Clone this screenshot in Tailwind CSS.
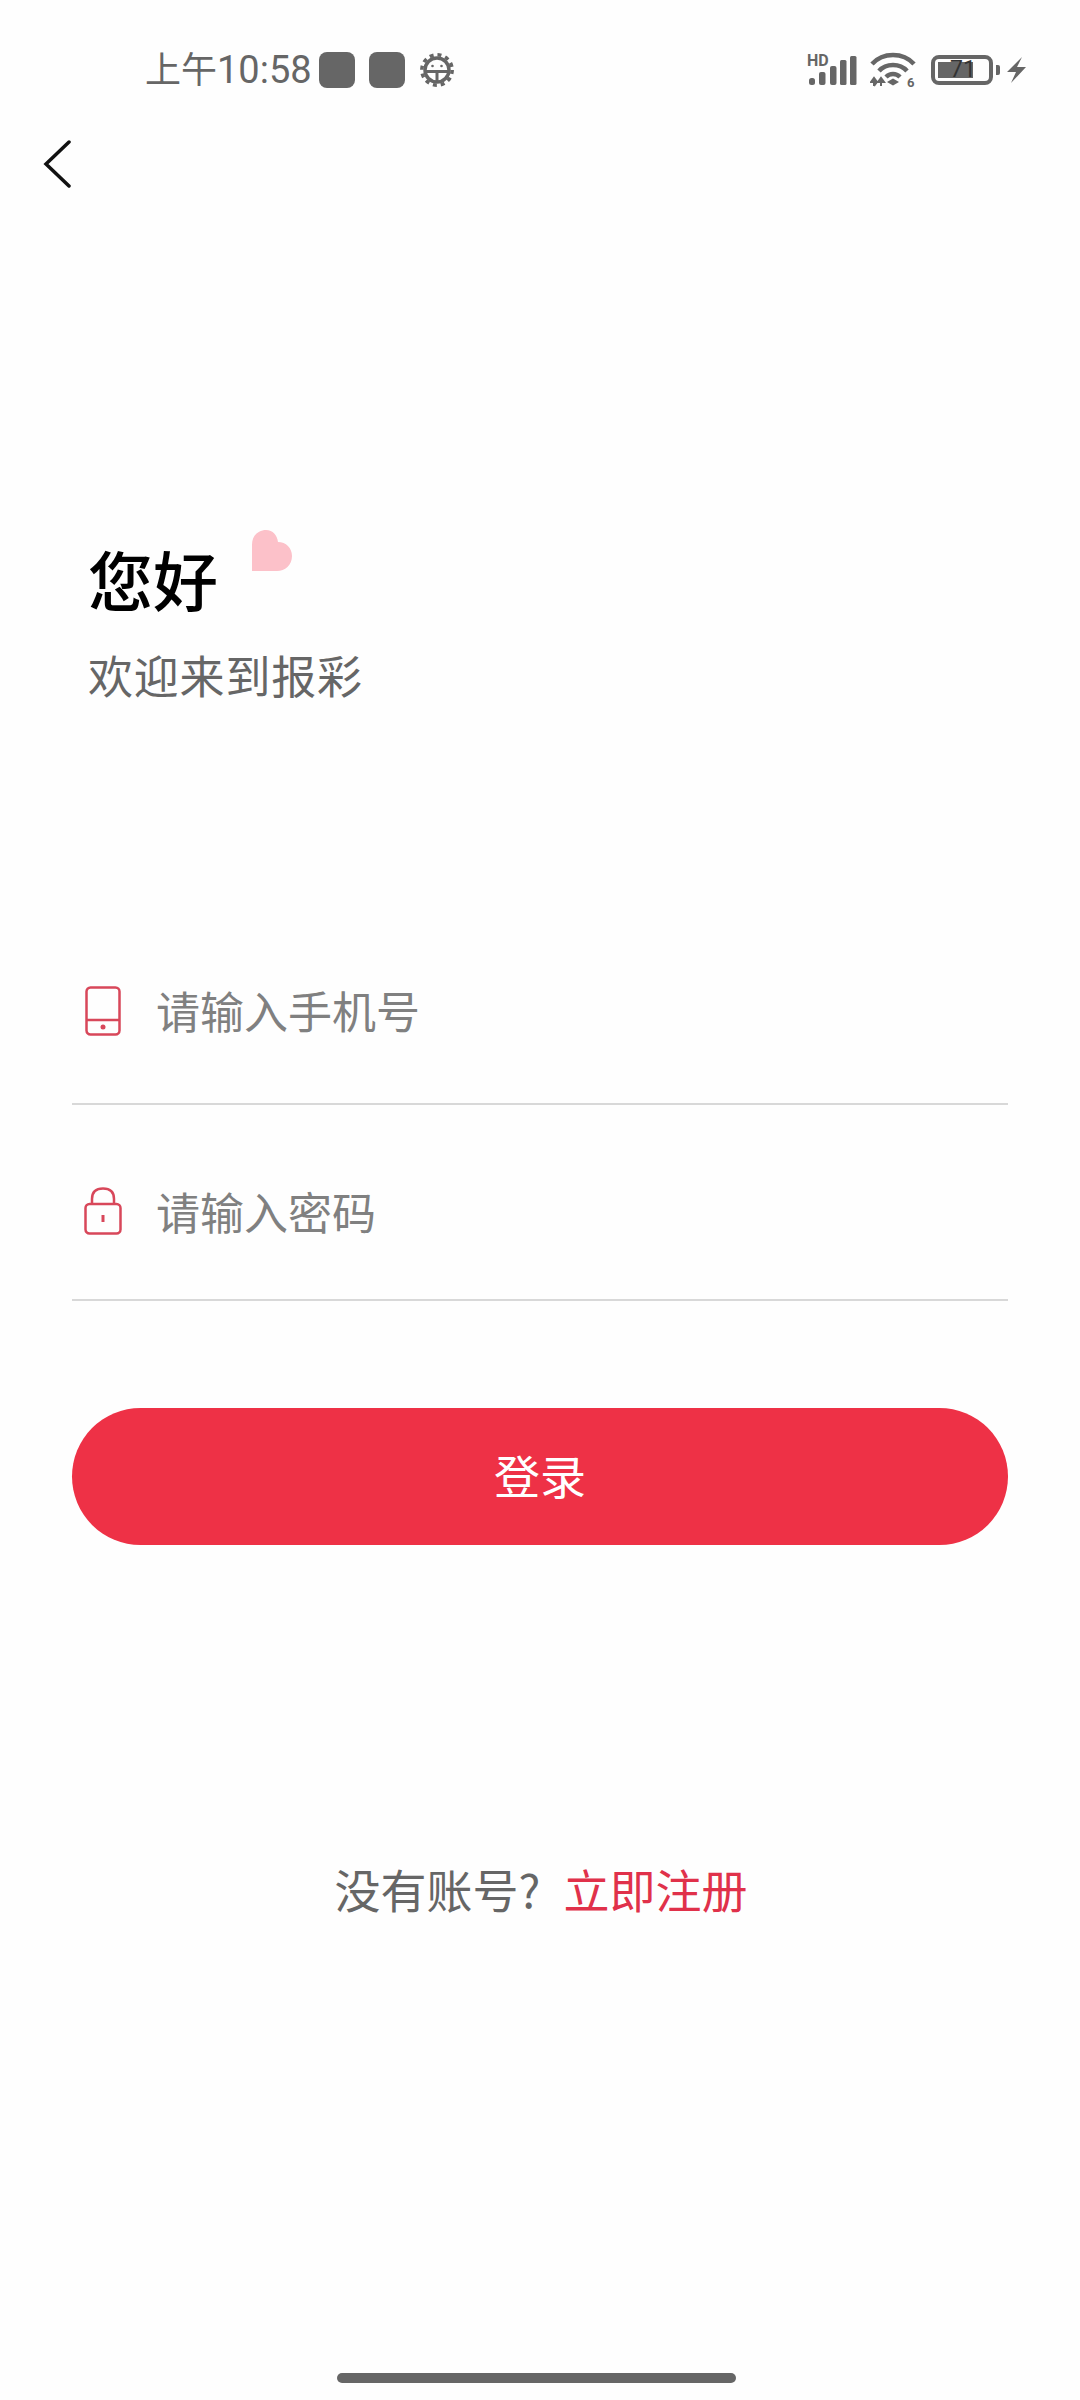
<!DOCTYPE html>
<html lang="zh">
<head>
    <meta charset="UTF-8">
    <meta name="viewport" content="width=device-width, initial-scale=1.0">
    <title>登录</title>
    <script src="https://cdn.jsdelivr.net/npm/@tailwindcss/browser@4"></script>
</head>
<body class="bg-white font-['Noto_Sans_CJK_SC','Noto_Sans',sans-serif]">
    <div class="relative w-[1080px] h-[2400px] overflow-hidden bg-[#fefefe]">
        <!-- Status bar -->
        <div class="flex items-center justify-between h-[70px] pt-[35px] pl-[145px] pr-[53px] box-content">
            <div class="flex items-center text-[#666666]">
                <span class="w-[174px] text-[36px] leading-[40px] whitespace-nowrap font-['Roboto','Noto_Sans_CJK_SC',sans-serif]">上午<span class="text-[38px]">10:58</span></span>
                <span class="w-[36px] h-[36px] rounded-[8px] bg-[#666666]"></span>
                <span class="w-[36px] h-[36px] rounded-[8px] bg-[#666666] ml-[14px]"></span>
                <svg class="ml-[14px]" width="36" height="36" viewBox="0 0 36 36" fill="none" stroke="#666666">
                    <circle cx="18" cy="18" r="12" stroke-width="3.5"/>
                    <circle cx="18" cy="18" r="15.2" stroke-width="3.5" stroke-dasharray="4 3.96"/>
                    <path d="M6 19.5H30M18 19.5V30" stroke-width="3"/>
                    <circle cx="13.5" cy="14" r="1.3" fill="#666666" stroke="none"/>
                    <circle cx="22.5" cy="14" r="1.3" fill="#666666" stroke="none"/>
                </svg>
            </div>
            <div class="flex items-center">
                <svg width="50" height="44" viewBox="0 -6 50 44" fill="#666666">
                    <text x="0" y="12" font-size="16" font-weight="700" font-family="Roboto">HD</text>
                    <rect x="2" y="24" width="6" height="7" rx="2.5"/>
                    <rect x="12" y="18" width="6.5" height="13" rx="2"/>
                    <rect x="23" y="12" width="6.5" height="19" rx="2"/>
                    <rect x="33" y="6" width="6.5" height="25" rx="1.5"/>
                    <rect x="43" y="2" width="6.5" height="29" rx="1.5"/>
                </svg>
                <svg class="ml-[13px]" width="46" height="46" viewBox="0 -6 46 46" fill="none" stroke="#666666" stroke-width="4.5">
                    <path d="M2 11C13 -1 33 -1 44 11"/>
                    <path d="M9 18C16 10 30 10 37 18"/>
                    <path d="M16 24C20 20 26 20 30 24"/>
                    <path d="M17 29L23 25.5L29 29L23 32.5Z" fill="#666666" stroke="none"/>
                    <path d="M1 29H7L4 25ZM4 33L7 29M8 29L11 25L14 29H8ZM11 33V29M4 33V29" stroke-width="2" fill="#666666"/>
                    <text x="37" y="33.5" font-size="13" font-weight="700" font-family="Roboto" fill="#666666" stroke="none">6</text>
                </svg>
                <div class="relative ml-[15px] w-[62px] h-[30px] rounded-[8px] border-[4px] border-[#666666] p-[3px]">
                    <div class="w-[35px] h-full bg-[#666666]"></div>
                    <span class="absolute left-[15px] top-[-2px] text-[23px] leading-[26px] text-[#333333] font-['Roboto',sans-serif]">71</span>
                </div>
                <span class="ml-[3px] w-[4px] h-[10px] bg-[#666666] rounded-r-[2px]"></span>
                <svg class="ml-[7px]" width="20" height="28" viewBox="0 0 20 28" fill="#666666">
                    <path d="M15 1L0 16H9L4 27L19 11H10Z"/>
                </svg>
            </div>
        </div>

        <!-- Back -->
        <div class="pl-[41px] mt-[34px]">
            <svg width="30" height="50" viewBox="0 0 30 50" fill="none" stroke="#111111" stroke-width="3.5" stroke-linecap="round">
                <path d="M28 3L5 25L28 47"/>
            </svg>
        </div>

        <!-- Greeting -->
        <div class="pl-[88px] mt-[351px] relative">
            <svg class="absolute left-[251px] top-[-11px]" width="42" height="43" viewBox="0 0 42 43" fill="#fcc1c9">
                <path d="M1 42V16C1 6 8 1 15 1C22 1 26 6 27 13C35 13 41 19 41 27C41 36 34 42 26 42Z"/>
            </svg>
            <h1 class="text-[65px] leading-[76px] font-medium text-black">您好</h1>
            <p class="text-[45px] leading-[60px] mt-[29px] text-[#666666] tracking-[0.8px]">欢迎来到报彩</p>
        </div>

        <!-- Form -->
        <div class="mx-[72px] mt-[240px]">
            <div class="flex items-center h-[132px] border-b-2 border-[#d8d8d8] pb-[26px] pl-[13px] box-content">
                <svg width="36" height="50" viewBox="0 0 36 50" fill="none" stroke="#d8475a" stroke-width="2.5">
                    <rect x="1.5" y="1.5" width="33" height="47" rx="4"/>
                    <path d="M1.5 34H34.5"/>
                    <circle cx="18" cy="41" r="2.5" fill="#d8475a" stroke="none"/>
                </svg>
                <span class="ml-[35px] pb-[2px] text-[44px] leading-[60px] text-[#808080]">请输入手机号</span>
            </div>
            <div class="flex items-center h-[132px] border-b-2 border-[#d8d8d8] pb-[22px] pl-[12px] box-content mt-[40px]">
                <svg width="38" height="48" viewBox="0 0 38 48" fill="none" stroke="#d8475a" stroke-width="2.5">
                    <rect x="1.5" y="17" width="35" height="29.5" rx="4"/>
                    <path d="M8 17V12C8 5 12 1.5 19 1.5C26 1.5 30 5 30 12V17"/>
                    <path d="M19 28V35" stroke-width="3"/>
                </svg>
                <span class="ml-[34px] text-[44px] leading-[60px] text-[#808080]">请输入密码</span>
            </div>
            <button class="block w-full h-[137px] mt-[107px] pb-[6px] rounded-full bg-[#ee3146] text-white text-[46px] leading-[60px]">登录</button>
        </div>

        <!-- Register -->
        <div class="flex justify-center mt-[313px] pl-[2px] text-[46px] leading-[60px]">
            <span class="text-[#666666]">没有账号?</span>
            <span class="ml-[23px] text-[#e0314a]">立即注册</span>
        </div>

        <!-- Home indicator -->
        <div class="absolute left-[337px] top-[2373px] w-[399px] h-[10px] rounded-full bg-[#666666]"></div>
    </div>
</body>
</html>
